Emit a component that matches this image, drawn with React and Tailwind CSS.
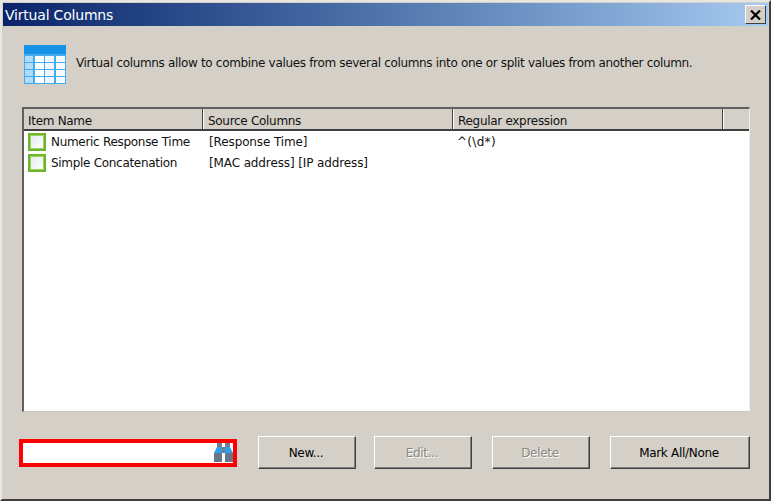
import React from 'react';

const TableIcon = () => (
  <svg width="42" height="39" viewBox="0 0 42 39" className="shrink-0 mt-[2px]">
    <rect x="0" y="0" width="42" height="39" fill="#42aaf0" />
    <rect x="0" y="0" width="42" height="9" fill="#1592e6" />
    {[10, 17, 24, 31].map((y) => (
      <g key={y}>
        <rect x="1" y={y + 1} width="8" height="6" fill="#aedcfa" />
        <rect x="11" y={y + 1} width="9" height="6" fill="#fdfeff" />
        <rect x="21" y={y + 1} width="9" height="6" fill="#f2f9fe" />
        <rect x="32" y={y + 1} width="9" height="6" fill="#f7fbff" />
      </g>
    ))}
  </svg>
);

const Binoculars = () => (
  <svg width="19" height="19" viewBox="0 0 19 19">
    <rect x="3" y="0" width="5" height="5" fill="#6f7f8f" />
    <rect x="11" y="0" width="5" height="5" fill="#6f7f8f" />
    <path d="M0 10 L3 4 H8 V10 Z" fill="#2f9fe8" />
    <path d="M19 10 L16 4 H11 V10 Z" fill="#2f9fe8" />
    <rect x="8" y="4" width="3" height="6" fill="#6f7f8f" />
    <rect x="0" y="10" width="8" height="9" fill="#66778a" />
    <rect x="11" y="10" width="8" height="9" fill="#66778a" />
  </svg>
);

const Check = () => (
  <div className="w-[18px] h-[18px] shrink-0 border-[2px] border-[#6db52a] shadow-[inset_0_0_0_1px_#9ccf5c] bg-gradient-to-br from-[#e4e9ef] to-white" />
);

const Button = ({ children, disabled, className }) => (
  <div
    className={`h-[33px] flex items-center justify-center pr-[2px] border border-t-white border-l-white border-r-[#404040] border-b-[#404040] shadow-[inset_-1px_-1px_0_#808080] ${className} ${
      disabled ? 'text-[#8a8880] [text-shadow:1px_1px_0_#ffffff]' : 'text-black'
    }`}
  >
    {children}
  </div>
);

const rows = [
  { name: 'Numeric Response Time', src: '[Response Time]', re: '^(\\d*)' },
  { name: 'Simple Concatenation', src: '[MAC address] [IP address]', re: '' },
];

const HeaderCell = ({ children, className }) => (
  <div className={`h-full flex items-center pt-[4px] border-r border-r-[#404040] shadow-[1px_0_0_#ffffff] ${className}`}>
    {children}
  </div>
);

export default function App() {
  return (
    <div className="w-[771px] h-[501px] flex flex-col bg-[#d4d0c8] border-t-[2px] border-l-[2px] border-t-[#e8e6e1] border-l-[#e8e6e1] border-r-[2px] border-b-[2px] border-r-[#404040] border-b-[#404040] text-[12px] tracking-[-0.3px] text-[#111] overflow-hidden">
      <div className="ml-[1px] mt-[1px] mr-[1px] h-[23px] shrink-0 flex items-center justify-between pl-[2px] pr-[2px] bg-gradient-to-r from-[#0a246a] to-[#a6caf0] font-['DejaVu_Sans',sans-serif]">
        <span className="text-white text-[14px] tracking-[-0.2px] pt-[2px]">Virtual Columns</span>
        <div className="w-[21px] h-[19px] flex items-center justify-center bg-[#d4d0c8] border border-t-white border-l-white border-r-[#404040] border-b-[#404040]">
          <svg width="11" height="10" viewBox="0 0 11 10">
            <path d="M1 0.5 L10 9.5 M10 0.5 L1 9.5" stroke="#000" strokeWidth="2.2" />
          </svg>
        </div>
      </div>

      <div className="flex-1 flex flex-col pl-[20px] pr-[19px] font-['DejaVu_Sans',sans-serif]">
        <div className="h-[81px] shrink-0 flex items-center gap-[10px] pb-[7px] pl-[2px]">
          <TableIcon />
          <span className="tracking-[-0.33px]">Virtual columns allow to combine values from several columns into one or split values from another column.</span>
        </div>

        <div className="h-[305px] shrink-0 flex flex-col bg-white border-t-[2px] border-l-[2px] border-t-[#606060] border-l-[#606060] border-r border-b border-r-[#f0efeb] border-b-[#c8c4bc]">
          <div className="h-[22px] shrink-0 flex bg-[#d4d0c8] border-b-[2px] border-b-[#404040]">
            <HeaderCell className="w-[179px] pl-[4px]">Item Name</HeaderCell>
            <HeaderCell className="w-[250px] pl-[5px]">Source Columns</HeaderCell>
            <HeaderCell className="w-[270px] pl-[5px]">Regular expression</HeaderCell>
          </div>
          <div className="flex flex-col">
            {rows.map((r) => (
              <div key={r.name} className="h-[21px] flex items-center">
                <div className="w-[180px] flex items-center gap-[5px] pl-[4px] shrink-0">
                  <Check />
                  <span className="whitespace-nowrap">{r.name}</span>
                </div>
                <div className="w-[250px] pl-[5px] shrink-0 tracking-[-0.12px]">{r.src}</div>
                <div className="pl-[3px] tracking-[0.3px]">{r.re}</div>
              </div>
            ))}
          </div>
        </div>

        <div className="flex items-center pt-[24px]">
          <div className="-ml-[3px] w-[218px] h-[28px] flex items-center justify-end bg-white border-[4px] border-[#ff0000]">
            <Binoculars />
          </div>
          <Button className="ml-[21px] w-[98px]">New...</Button>
          <Button disabled className="ml-[18px] w-[98px]">Edit...</Button>
          <Button disabled className="ml-[20px] w-[98px]">Delete</Button>
          <Button className="ml-[20px] w-[140px]">Mark All/None</Button>
        </div>
      </div>
    </div>
  );
}
